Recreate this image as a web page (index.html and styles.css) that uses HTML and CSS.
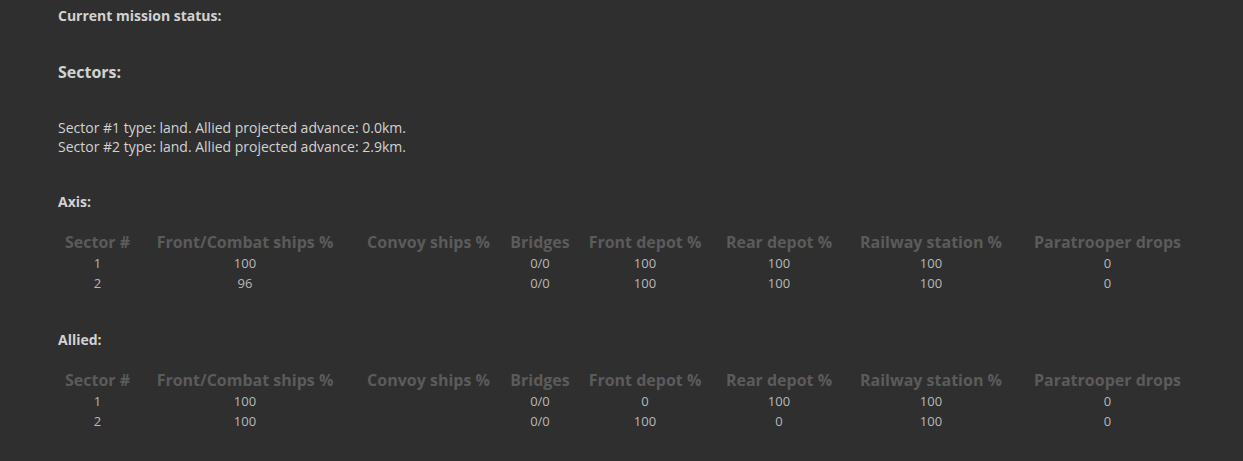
FILE: index.html
```html
<!DOCTYPE html>
<html>
<head>
<meta charset="utf-8">
<link rel="stylesheet" href="styles.css">
</head>
<body>
<div class="page">
  <div class="status-title">Current mission status:</div>
  <div class="section-title">Sectors:</div>
  <div class="sector-list">
    <div>Sector #1 type: land. Allied projected advance: 0.0km.</div>
    <div>Sector #2 type: land. Allied projected advance: 2.9km.</div>
  </div>

  <div class="side-title">Axis:</div>
  <table class="stats">
    <colgroup>
      <col class="c1"><col class="c2"><col class="c3"><col class="c4"><col class="c5"><col class="c6"><col class="c7"><col class="c8">
    </colgroup>
    <thead>
      <tr><th>Sector #</th><th>Front/Combat ships %</th><th>Convoy ships %</th><th>Bridges</th><th>Front depot %</th><th>Rear depot %</th><th>Railway station %</th><th>Paratrooper drops</th></tr>
    </thead>
    <tbody>
      <tr><td>1</td><td>100</td><td></td><td>0/0</td><td>100</td><td>100</td><td>100</td><td>0</td></tr>
      <tr><td>2</td><td>96</td><td></td><td>0/0</td><td>100</td><td>100</td><td>100</td><td>0</td></tr>
    </tbody>
  </table>

  <div class="side-title allied">Allied:</div>
  <table class="stats">
    <colgroup>
      <col class="c1"><col class="c2"><col class="c3"><col class="c4"><col class="c5"><col class="c6"><col class="c7"><col class="c8">
    </colgroup>
    <thead>
      <tr><th>Sector #</th><th>Front/Combat ships %</th><th>Convoy ships %</th><th>Bridges</th><th>Front depot %</th><th>Rear depot %</th><th>Railway station %</th><th>Paratrooper drops</th></tr>
    </thead>
    <tbody>
      <tr><td>1</td><td>100</td><td></td><td>0/0</td><td>0</td><td>100</td><td>100</td><td>0</td></tr>
      <tr><td>2</td><td>100</td><td></td><td>0/0</td><td>100</td><td>0</td><td>100</td><td>0</td></tr>
    </tbody>
  </table>
</div>
</body>
</html>
```

FILE: styles.css
```css
html, body {
  margin: 0;
  padding: 0;
  background: #2f2f2f;
}
body {
  font-family: "Open Sans", "Liberation Sans", sans-serif;
  color: #d2d2d2;
  font-size: 14px;
}
.page {
  padding: 6px 0 0 58px;
}
.status-title {
  font-weight: 700;
  font-size: 14px;
  line-height: 20px;
}
.section-title {
  font-weight: 700;
  font-size: 16px;
  line-height: 22px;
  margin-top: 35px;
}
.sector-list {
  margin-top: 35px;
  line-height: 19px;
}
.side-title {
  font-weight: 700;
  font-size: 14px;
  line-height: 20px;
  margin-top: 36px;
}
.side-title.allied {
  margin-top: 37px;
}
.stats {
  border-collapse: collapse;
  table-layout: fixed;
  width: 1139px;
  margin-top: 19px;
}
.stats th, .stats td {
  padding: 0;
  text-align: center;
  white-space: nowrap;
}
.stats th {
  font-size: 16px;
  font-weight: 700;
  line-height: 22px;
  color: #5b5b5b;
}
.stats td {
  font-size: 13px;
  line-height: 20px;
  color: #b8b8b8;
}
.c1 { width: 79px; }
.c2 { width: 216px; }
.c3 { width: 151px; }
.c4 { width: 72px; }
.c5 { width: 138px; }
.c6 { width: 130px; }
.c7 { width: 174px; }
.c8 { width: 179px; }
```
